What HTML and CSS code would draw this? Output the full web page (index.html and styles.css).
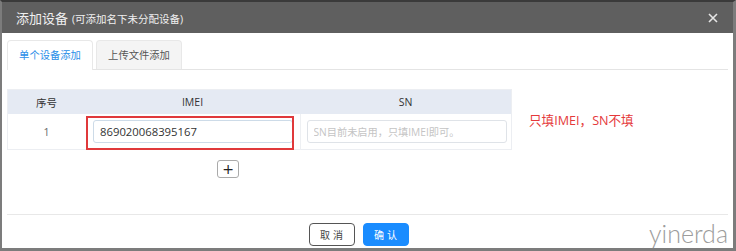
FILE: index.html
```html
<!DOCTYPE html>
<html lang="zh-CN">
<head>
    <meta charset="UTF-8">
    <title>添加设备</title>
    <link rel="stylesheet" href="styles.css">
</head>
<body>
    <div class="dialog">
        <div class="dialog-head">
            <span class="title">添加设备</span>
            <span class="subtitle">(可添加名下未分配设备)</span>
            <svg class="close" width="10" height="10" viewBox="0 0 10 10">
                <path d="M1 1L9 9M9 1L1 9" stroke="#e6e6e6" stroke-width="1.6" fill="none"/>
            </svg>
        </div>
        <div class="dialog-body">
            <div class="tabs">
                <div class="tab active">单个设备添加</div>
                <div class="tab">上传文件添加</div>
            </div>
            <div class="row">
                <table class="grid">
                    <thead>
                        <tr>
                            <th class="col-no">序号</th>
                            <th class="col-imei">IMEI</th>
                            <th class="col-sn">SN</th>
                        </tr>
                    </thead>
                    <tbody>
                        <tr>
                            <td class="col-no">1</td>
                            <td class="col-imei">
                                <input class="field" type="text" value="869020068395167">
                                <span class="mark"></span>
                            </td>
                            <td class="col-sn">
                                <input class="field" type="text" placeholder="SN目前未启用，只填IMEI即可。">
                            </td>
                        </tr>
                    </tbody>
                </table>
                <div class="note">只填IMEI，SN不填</div>
            </div>
            <div class="add-row">
                <button class="add">+</button>
            </div>
            <div class="dialog-foot">
                <button class="btn">取消</button>
                <button class="btn primary">确认</button>
            </div>
        </div>
        <div class="watermark">yinerda</div>
    </div>
</body>
</html>
```

FILE: styles.css
```css
body {
    margin: 0;
    background: #fff;
    font-family: "Open Sans", "Noto Sans CJK SC", sans-serif;
    color: #333;
}
.dialog {
    position: relative;
    box-sizing: border-box;
    width: 736px;
    height: 251px;
    border: 2px solid #7c7c7c;
    border-top-color: #3a3a3a;
    border-right-width: 3px;
    border-bottom-width: 3px;
    background: #fff;
}
.dialog-head {
    display: flex;
    align-items: center;
    height: 31px;
    padding: 0 14px;
    background: #5f5f5f;
    color: #f0f0f0;
}
.title {
    font-size: 13px;
}
.subtitle {
    font-size: 10.5px;
    margin-left: 4px;
    margin-top: 2px;
}
.close {
    margin-left: auto;
    margin-right: 1px;
}
.dialog-body {
    padding: 7px 5px 0 5px;
}
.tabs {
    display: flex;
    height: 29px;
    border-bottom: 1px solid #e4e4e4;
}
.tab {
    box-sizing: border-box;
    width: 86px;
    margin-right: 3px;
    border: 1px solid #e8e8e8;
    border-bottom: none;
    border-radius: 4px 4px 0 0;
    background: #f4f4f4;
    font-size: 10.3px;
    line-height: 28px;
    text-align: center;
    color: #555;
}
.tab.active {
    background: #fff;
    color: #2a8ee8;
    margin-bottom: -1px;
    height: 30px;
}
.row {
    display: flex;
    align-items: center;
    margin-top: 19px;
}
.grid {
    width: 503px;
    table-layout: fixed;
    border-collapse: collapse;
    border: 1px solid #eceef2;
    font-size: 10.5px;
}
.grid th {
    height: 24px;
    padding: 0;
    background: #e5eaf3;
    font-weight: normal;
    color: #333;
}
.grid td {
    height: 35px;
    padding: 0;
    text-align: center;
    color: #666;
}
.col-no {
    width: 77px;
}
.col-imei {
    position: relative;
    width: 215px;
}
.col-sn {
    width: 211px;
}
.grid td.col-imei {
    text-align: left;
    padding-left: 8px;
    border-right: 1px solid #eef0f3;
}
.grid td.col-sn {
    text-align: left;
    padding-left: 6px;
}
.field {
    box-sizing: border-box;
    width: 200px;
    height: 23px;
    padding: 0 6px;
    border: 1px solid #cddbe8;
    border-radius: 3px;
    font-family: "Open Sans", "Noto Sans CJK SC", sans-serif;
    font-size: 11.3px;
    color: #333;
    vertical-align: middle;
}
.col-sn .field {
    border-color: #dfe3e8;
    font-size: 10.2px;
}
.field::placeholder {
    color: #c4c4c4;
}
.mark {
    position: absolute;
    left: 1px;
    top: 2px;
    width: 208px;
    height: 34px;
    box-sizing: border-box;
    border: 2px solid #e0393b;
}
.note {
    margin-left: 17px;
    font-size: 12.6px;
    color: #e5393b;
}
.add-row {
    padding-left: 210px;
    margin-top: 7px;
}
.add {
    width: 22px;
    height: 18px;
    padding: 0;
    border: 1px solid #aaa;
    border-radius: 3px;
    background: #fff;
    font-family: "DejaVu Sans", sans-serif;
    font-size: 14px;
    line-height: 14px;
    color: #222;
}
.dialog-foot {
    display: flex;
    justify-content: center;
    gap: 8px;
    margin-top: 35px;
    padding: 8px 18px 0 0;
    border-top: 1px solid #e8e8e8;
}
.btn {
    width: 46px;
    height: 23px;
    padding: 0 0 0 3px;
    border: 1px solid #555;
    border-radius: 4px;
    background: #fff;
    font-family: "Noto Sans CJK SC", sans-serif;
    font-size: 10px;
    letter-spacing: 3px;
    color: #444;
}
.btn.primary {
    border-color: #1a8cff;
    background: #1a8cff;
    color: #fff;
}
.watermark {
    position: absolute;
    right: 5px;
    bottom: 0;
    font-family: Lato, sans-serif;
    font-weight: 300;
    font-size: 25px;
    color: #9c9c9c;
}
```
